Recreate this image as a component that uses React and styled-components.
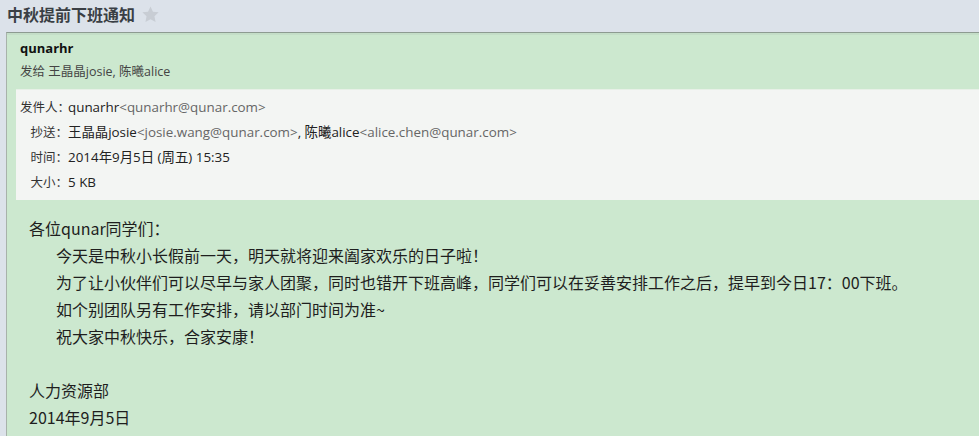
import React from 'react';
import styled, { createGlobalStyle } from 'styled-components';

const GlobalStyle = createGlobalStyle`
  html, body {
    margin: 0;
    padding: 0;
    background: #dce2ea;
    overflow: hidden;
  }
  body {
    font-family: "Open Sans", "Noto Sans CJK SC", sans-serif;
    color: #222;
  }
`;

const Page = styled.div`
  width: 979px;
  height: 436px;
  overflow: hidden;
  padding-left: 6px;
  box-sizing: border-box;
`;

const TitleBar = styled.div`
  display: flex;
  align-items: center;
  gap: 6px;
  height: 32px;
  padding-left: 1px;
  padding-bottom: 4px;
  box-sizing: border-box;
`;

const Title = styled.h1`
  margin: 0;
  font-size: 16px;
  font-weight: 700;
  color: #3a3f45;
  line-height: 20px;
  font-family: "Noto Sans CJK SC", sans-serif;
`;

const Card = styled.section`
  width: 1000px;
  min-height: 420px;
  background: #cce8cf;
  border-top: 1px solid #8d9b91;
  border-left: 1px solid #a8b2aa;
  box-shadow: inset 0 2px 0 #c4dec8;
  padding: 3px 0 0 9px;
  box-sizing: border-box;
`;

const FromBlock = styled.div`
  padding-left: 4px;
  font-size: 12.5px;
  line-height: 24px;
`;

const Sender = styled.div`
  font-weight: 700;
  font-size: 13px;
  color: #111;
`;

const Recipients = styled.div`
  color: #444;
`;

const InfoBox = styled.div`
  margin-top: 5px;
  background: #f3f5f3;
  border-top: 1px solid #e7f0e7;
  padding: 5px 0 5px 4px;
  font-size: 12.5px;
  line-height: 25px;
  color: #333;
`;

const InfoRow = styled.div`
  display: flex;
`;

const Label = styled.span`
  display: inline-block;
  width: 48px;
  text-align: right;
  white-space: nowrap;
  color: #333;
`;

const Value = styled.span`
  font-size: 13.4px;
  white-space: nowrap;
`;

const Name = styled.span`
  color: #222;
`;

const Addr = styled.span`
  color: #666;
`;

const Body = styled.div`
  padding: 15px 0 0 13px;
  font-size: 16px;
  line-height: 27px;
  color: #1e1e1e;
  font-family: "Noto Sans CJK SC", sans-serif;
`;

const Line = styled.div`
  padding-left: ${p => (p.$indent ? '27px' : '0')};
  min-height: 27px;
  white-space: nowrap;
`;

const Star = () => (
  <svg width="19" height="19" viewBox="0 0 24 24">
    <path
      d="M12 1.8l3.1 6.6 7.2.9-5.3 5 1.4 7.1L12 17.9l-6.4 3.5 1.4-7.1-5.3-5 7.2-.9z"
      fill="#c8cdd4"
    />
  </svg>
);

const infoRows = [
  {
    label: '发件人：',
    value: (
      <>
        <Name>qunarhr</Name>
        <Addr>&lt;qunarhr@qunar.com&gt;</Addr>
      </>
    ),
  },
  {
    label: '抄送：',
    value: (
      <>
        <Name>王晶晶josie</Name>
        <Addr>&lt;josie.wang@qunar.com&gt;</Addr>
        <Name>, 陈曦alice</Name>
        <Addr>&lt;alice.chen@qunar.com&gt;</Addr>
      </>
    ),
  },
  { label: '时间：', value: <Name>2014年9月5日 (周五) 15:35</Name> },
  { label: '大小：', value: <Name>5 KB</Name> },
];

const bodyLines = [
  { text: '各位qunar同学们：' },
  { text: '今天是中秋小长假前一天，明天就将迎来阖家欢乐的日子啦！', indent: true },
  {
    text: '为了让小伙伴们可以尽早与家人团聚，同时也错开下班高峰，同学们可以在妥善安排工作之后，提早到今日17：00下班。',
    indent: true,
  },
  { text: '如个别团队另有工作安排，请以部门时间为准~', indent: true },
  { text: '祝大家中秋快乐，合家安康！', indent: true },
  { text: '' },
  { text: '人力资源部' },
  { text: '2014年9月5日' },
];

export default function App() {
  return (
    <Page>
      <GlobalStyle />
      <TitleBar>
        <Title>中秋提前下班通知</Title>
        <Star />
      </TitleBar>
      <Card>
        <FromBlock>
          <Sender>qunarhr</Sender>
          <Recipients>发给 王晶晶josie, 陈曦alice</Recipients>
        </FromBlock>
        <InfoBox>
          {infoRows.map(r => (
            <InfoRow key={r.label}>
              <Label>{r.label}</Label>
              <Value>{r.value}</Value>
            </InfoRow>
          ))}
        </InfoBox>
        <Body>
          {bodyLines.map((l, i) => (
            <Line key={i} $indent={l.indent}>
              {l.text}
            </Line>
          ))}
        </Body>
      </Card>
    </Page>
  );
}
